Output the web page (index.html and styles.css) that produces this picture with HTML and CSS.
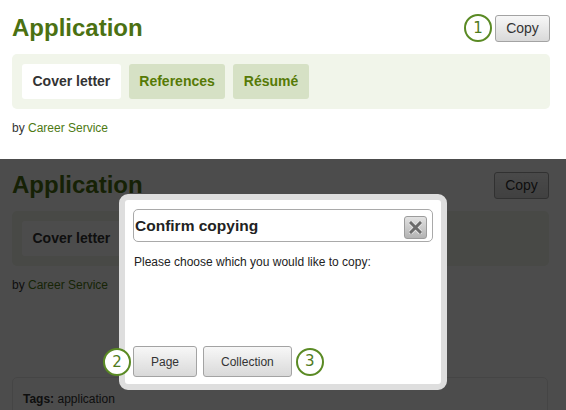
FILE: index.html
```html
<!DOCTYPE html>
<html>
<head>
<meta charset="utf-8">
<link rel="stylesheet" href="styles.css">
</head>
<body>
<div class="shot shot-top">
  <div class="page">
    <div class="head">
      <h1 class="title">Application</h1>
      <div class="actions">
        <span class="num">1</span>
        <button class="btn btn-copy">Copy</button>
      </div>
    </div>
    <div class="tabs">
      <span class="tab tab-active">Cover letter</span>
      <span class="tab">References</span>
      <span class="tab">Résumé</span>
    </div>
    <p class="by">by <a class="link">Career Service</a></p>
  </div>
</div>
<div class="shot shot-dark">
  <div class="page page-dark">
    <div class="head">
      <h1 class="title">Application</h1>
      <div class="actions">
        <button class="btn btn-copy">Copy</button>
      </div>
    </div>
    <div class="tabs">
      <span class="tab tab-active">Cover letter</span>
      <span class="tab">References</span>
      <span class="tab">Résumé</span>
    </div>
    <p class="by">by <a class="link">Career Service</a></p>
    <div class="tagsbox"><b>Tags:</b> application</div>
  </div>
  <div class="overlay"></div>
  <div class="dialog">
    <div class="dlg-head">
      <span class="dlg-title">Confirm copying</span>
      <span class="close"><svg width="13" height="13" viewBox="0 0 13 13"><path d="M2 2 L11 11 M11 2 L2 11" stroke="#e6e6e6" stroke-width="4.6" stroke-linecap="square"/><path d="M2 2 L11 11 M11 2 L2 11" stroke="#6b6b6b" stroke-width="3" stroke-linecap="square"/></svg></span>
    </div>
    <p class="dlg-text">Please choose which you would like to copy:</p>
    <div class="dlg-buttons">
      <button class="btn btn-dlg">Page</button>
      <button class="btn btn-dlg">Collection</button>
      <span class="num">3</span>
    </div>
    <span class="num num-2">2</span>
  </div>
</div>
</body>
</html>
```
FILE: styles.css
```css
* { box-sizing: border-box; }
html, body { margin: 0; padding: 0; }
body {
  width: 566px;
  height: 410px;
  overflow: hidden;
  font-family: "Liberation Sans", Arial, sans-serif;
  color: #333;
  background: #fff;
}
.shot {
  position: relative;
  overflow: hidden;
  background: #fff;
}
.shot-top { height: 159px; }
.shot-dark { height: 251px; }
.page {
  padding: 14px 16px 0 12px;
}
.page-dark { padding-top: 12px; padding-right: 17px; }
.head {
  display: flex;
  align-items: center;
  justify-content: space-between;
  height: 28px;
}
.title {
  margin: 0;
  font-size: 24px;
  line-height: 28px;
  font-weight: bold;
  color: #4b7112;
}
.actions {
  display: flex;
  align-items: center;
  gap: 3px;
}
.num {
  display: inline-flex;
  align-items: center;
  justify-content: center;
  width: 28px;
  height: 28px;
  border: 2px solid #5a8a24;
  border-radius: 50%;
  background: #fff;
  font-family: "DejaVu Sans", sans-serif;
  font-size: 15px;
  color: #4f7a1c;
  line-height: 1;
}
.btn {
  font-family: "Liberation Sans", Arial, sans-serif;
  color: #333;
  border: 1px solid #a3a3a3;
  border-radius: 3px;
  background: linear-gradient(#f7f7f7, #d9d9d9);
  padding: 0;
  margin: 0;
}
.btn-copy {
  width: 55px;
  height: 27px;
  font-size: 14px;
}
.tabs {
  margin-top: 12px;
  background: #f1f5ea;
  border-radius: 5px;
  padding: 10px;
  display: flex;
  gap: 8px;
}
.tab {
  height: 35px;
  line-height: 35px;
  padding: 0 10.5px;
  border-radius: 3px;
  background: #d6e1c5;
  font-size: 14px;
  font-weight: bold;
  color: #567a06;
}
.tab-active {
  background: #fff;
  color: #333;
}
.by {
  margin: 12px 0 0;
  font-size: 12px;
  line-height: 14px;
  color: #333;
}
.link { color: #4e7a13; }
.tagsbox {
  margin-top: 85px;
  margin-right: 1px;
  border: 1px solid #e8e8e8;
  border-radius: 5px;
  padding: 14px 10px;
  font-size: 12px;
  line-height: 14px;
  color: #333;
  height: 60px;
}
.overlay {
  position: absolute;
  inset: 0;
  background: rgba(0, 0, 0, 0.7);
}
.dialog {
  position: absolute;
  left: 119px;
  top: 35px;
  width: 328px;
  height: 196px;
  border: 6px solid #dedede;
  border-radius: 9px;
  background: #fff;
  padding: 9px 8px 7px;
  display: flex;
  flex-direction: column;
}
.dlg-head {
  height: 33px;
  border: 1px solid #a9a9a9;
  border-radius: 5px;
  display: flex;
  align-items: center;
  justify-content: space-between;
  padding: 0 5px 0 1px;
}
.dlg-title {
  font-size: 15.5px;
  font-weight: bold;
  color: #222;
}
.close {
  width: 23px;
  height: 23px;
  margin-top: 3px;
  border: 1px solid #9c9c9c;
  border-radius: 3px;
  background: linear-gradient(#e2e2e2, #b3b3b3);
  display: flex;
  align-items: center;
  justify-content: center;
}
.dlg-text {
  margin: 13px 0 0 1px;
  font-size: 12px;
  line-height: 14px;
  color: #222;
}
.dlg-buttons {
  margin-top: auto;
  display: flex;
  align-items: center;
  gap: 6px;
}
.dlg-buttons .num { margin-left: -2px; }
.btn-dlg {
  height: 31px;
  padding: 0 17px;
  font-size: 12px;
}
.num-2 {
  position: absolute;
  left: -22px;
  bottom: 8px;
}
```
